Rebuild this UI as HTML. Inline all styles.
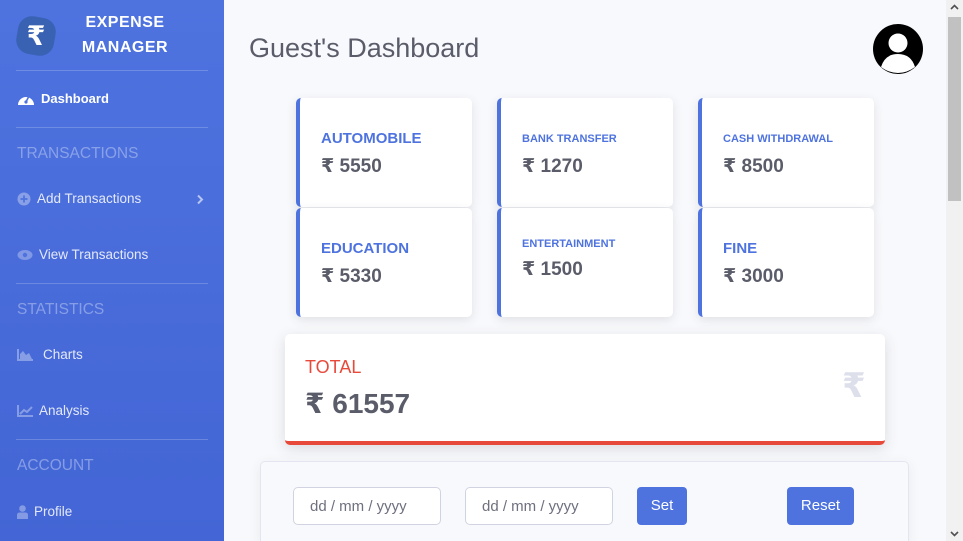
<!DOCTYPE html>
<html><head><meta charset="utf-8"><style>
*{box-sizing:border-box;margin:0;padding:0}
html,body{width:963px;height:541px;overflow:hidden}
body{background:#f8f9fc;font-family:"Liberation Sans","DejaVu Sans",sans-serif;position:relative}
.sb{position:absolute;left:0;top:0;width:224px;height:541px;background:linear-gradient(180deg,#4e73df 0%,#4365d5 100%);color:#fff}
.logo{position:absolute;left:17px;top:17px;width:38px;height:38px;background:#3a62b3;border-radius:14px;transform:rotate(10deg)}
.logo span{position:absolute;left:0;top:0;width:38px;height:38px;text-align:center;line-height:38px;font-size:27px;font-weight:bold;transform:rotate(-10deg);color:#fff}
.brand{position:absolute;left:70px;width:110px;text-align:center;font-weight:bold;font-size:16px;letter-spacing:0.5px;line-height:25px;top:10px}
.hr{position:absolute;left:16px;width:192px;height:1px;background:rgba(255,255,255,.2)}
.item{position:absolute;left:17px;font-size:13.5px;color:rgba(255,255,255,.85);display:flex;align-items:center;gap:6px}
.head{position:absolute;left:17px;font-size:15.5px;color:rgba(255,255,255,.35)}
.main{position:absolute;left:224px;top:0;width:722px;height:541px;overflow:hidden}
h1{position:absolute;left:25px;top:33px;font-size:27px;font-weight:normal;color:#5a5c69}
.card{position:absolute;width:176px;height:109px;background:#fff;border-left:4px solid #4e73df;border-radius:5px;box-shadow:0 3px 10px rgba(58,59,69,.12)}
.card .t{position:absolute;left:21px;color:#4e73df;font-weight:bold}
.card .v{position:absolute;left:21px;color:#5a5c69;font-weight:bold;font-size:19px}
.total{position:absolute;left:61px;top:334px;width:600px;height:111px;background:#fff;border-radius:5px;border-bottom:4px solid #e74a3b;box-shadow:0 4px 14px rgba(58,59,69,.15)}
.panel{position:absolute;left:36px;top:461px;width:649px;height:80px;background:#f8f9fc;border:1px solid #e3e6f0;border-bottom:none;border-radius:5px 5px 0 0;box-shadow:0 3px 12px rgba(58,59,69,.08)}
.inp{position:absolute;top:25px;width:148px;height:38px;background:#fff;border:1px solid #d1d3e2;border-radius:5px;color:#6e707e;font-size:15px;padding:10px 0 0 16px}
.btn{position:absolute;top:25px;height:38px;background:#4e73df;border-radius:4px;color:#fff;font-size:15px;text-align:center;line-height:38px}
.scroll{position:absolute;left:946px;top:0;width:17px;height:541px;background:#f1f1f1}
</style></head><body>
<div class="sb">
 <div class="logo"><span>₹</span></div>
 <div class="brand">EXPENSE<br>MANAGER</div>
 <div class="hr" style="top:70px"></div>
 <div class="item" style="top:91px;color:#fff;font-weight:bold;font-size:13px"><svg width="18" height="14" viewBox="0 0 18 14"><path d="M1 13A8 8 0 1 1 17 13Z" fill="#fff"/><path d="M9 10L12 4" stroke="#4e73df" stroke-width="1.6"/><circle cx="9" cy="10" r="1.6" fill="#4e73df"/></svg>Dashboard</div>
 <div class="hr" style="top:127px"></div>
 <div class="head" style="top:145px">TRANSACTIONS</div>
 <div class="item" style="top:191px"><svg width="14" height="14"><circle cx="7" cy="7" r="6.5" fill="rgba(255,255,255,.35)"/><path d="M7 3.5V10.5M3.5 7H10.5" stroke="#4e73df" stroke-width="1.8"/></svg>Add Transactions</div>
 <svg style="position:absolute;left:196px;top:194px" width="8" height="11"><path d="M2 1.5L6 5.5L2 9.5" stroke="rgba(255,255,255,.6)" stroke-width="2" fill="none"/></svg>
 <div class="item" style="top:247px"><svg width="16" height="12"><ellipse cx="8" cy="6" rx="7.5" ry="5" fill="rgba(255,255,255,.3)"/><circle cx="8" cy="6" r="2.2" fill="#4e73df"/></svg>View Transactions</div>
 <div class="hr" style="top:283px"></div>
 <div class="head" style="top:301px">STATISTICS</div>
 <div class="item" style="top:347px"><svg width="16" height="12" style="margin-right:4px"><path d="M1 0V11H16" stroke="rgba(255,255,255,.35)" stroke-width="2" fill="none"/><path d="M3 10V5L6 2L9 6L12 4L15 10Z" fill="rgba(255,255,255,.35)"/></svg>Charts</div>
 <div class="item" style="top:403px"><svg width="16" height="12"><path d="M1 0V11H16" stroke="rgba(255,255,255,.35)" stroke-width="2" fill="none"/><path d="M3 9L7 5L10 7L15 2" stroke="rgba(255,255,255,.35)" stroke-width="2" fill="none"/></svg>Analysis</div>
 <div class="hr" style="top:439px"></div>
 <div class="head" style="top:457px">ACCOUNT</div>
 <div class="item" style="top:504px"><svg width="11" height="14"><circle cx="5.5" cy="3.5" r="3.3" fill="rgba(255,255,255,.35)"/><path d="M0 14V10Q0 7.5 3 7.5H8Q11 7.5 11 10V14Z" fill="rgba(255,255,255,.35)"/></svg>Profile</div>
</div>
<div class="main">
 <h1>Guest's Dashboard</h1>
 <svg style="position:absolute;left:648px;top:23px" width="52" height="52" viewBox="0 0 52 52"><circle cx="26" cy="26" r="25" fill="#000"/><circle cx="26" cy="20" r="9.5" fill="#fff"/><path d="M9 44Q13 31 26 31Q39 31 43 44Q35 50 26 50Q17 50 9 44Z" fill="#fff"/></svg>
 <div class="card" style="left:72px;top:98px"><div class="t" style="top:32px;font-size:15px">AUTOMOBILE</div><div class="v" style="top:57px">₹ 5550</div></div>
 <div class="card" style="left:273px;top:98px"><div class="t" style="top:35px;font-size:11px">BANK TRANSFER</div><div class="v" style="top:57px">₹ 1270</div></div>
 <div class="card" style="left:474px;top:98px"><div class="t" style="top:35px;font-size:11px">CASH WITHDRAWAL</div><div class="v" style="top:57px">₹ 8500</div></div>
 <div class="card" style="left:72px;top:208px"><div class="t" style="top:32px;font-size:15px">EDUCATION</div><div class="v" style="top:57px">₹ 5330</div></div>
 <div class="card" style="left:273px;top:208px"><div class="t" style="top:30px;font-size:11px">ENTERTAINMENT</div><div class="v" style="top:50px">₹ 1500</div></div>
 <div class="card" style="left:474px;top:208px"><div class="t" style="top:32px;font-size:15px">FINE</div><div class="v" style="top:57px">₹ 3000</div></div>
 <div class="total">
  <div style="position:absolute;left:20px;top:23px;font-size:18px;color:#e74a3b">TOTAL</div>
  <div style="position:absolute;left:20px;top:53px;font-size:28px;font-weight:bold;color:#5a5c69">₹ 61557</div>
  <div style="position:absolute;left:557px;top:32px;font-size:34px;font-weight:bold;color:#dddfeb">₹</div>
 </div>
 <div class="panel">
  <div class="inp" style="left:32px">dd / mm / yyyy</div>
  <div class="inp" style="left:204px">dd / mm / yyyy</div>
  <div class="btn" style="left:376px;width:50px">Set</div>
  <div class="btn" style="left:526px;width:67px">Reset</div>
 </div>
</div>
<div class="scroll">
 <svg style="position:absolute;left:4px;top:4px" width="9" height="6"><path d="M1 5L4.5 1.5L8 5" stroke="#505050" stroke-width="1.6" fill="none"/></svg>
 <div style="position:absolute;left:2px;top:17px;width:13px;height:184px;background:#c1c1c1"></div>
 <svg style="position:absolute;left:4px;top:531px" width="9" height="6"><path d="M1 1L4.5 4.5L8 1" stroke="#505050" stroke-width="1.6" fill="none"/></svg>
</div>
</body></html>
